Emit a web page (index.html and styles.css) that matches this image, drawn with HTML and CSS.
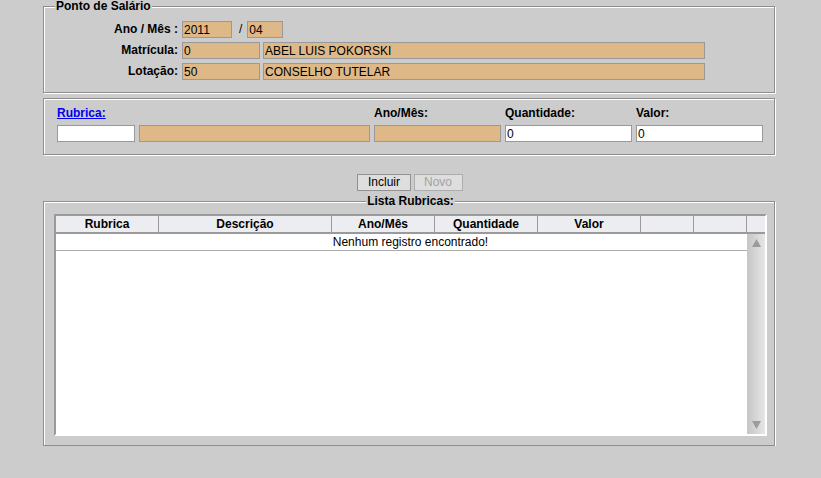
FILE: index.html
```html
<!DOCTYPE html>
<html lang="pt-BR">
<head>
<meta charset="utf-8">
<title>Ponto de Salário</title>
<link rel="stylesheet" href="styles.css">
</head>
<body>
<div class="page">
  <fieldset class="box box-ponto">
    <legend>Ponto de Salário</legend>
    <div class="form-grid">
      <label class="lbl">Ano / Mês :</label>
      <div class="fields">
        <input class="inp ro w-ano" value="2011" readonly>
        <span class="slash">/</span>
        <input class="inp ro w-mes" value="04" readonly>
      </div>
      <label class="lbl">Matrícula:</label>
      <div class="fields pair">
        <input class="inp ro w-cod" value="0" readonly>
        <input class="inp ro w-desc" value="ABEL LUIS POKORSKI" readonly>
      </div>
      <label class="lbl">Lotação:</label>
      <div class="fields pair">
        <input class="inp ro w-cod" value="50" readonly>
        <input class="inp ro w-desc" value="CONSELHO TUTELAR" readonly>
      </div>
    </div>
  </fieldset>

  <fieldset class="box box-rubrica">
    <div class="rub-grid">
      <a class="link" href="#">Rubrica:</a>
      <span class="hdr">Ano/Mês:</span>
      <span class="hdr">Quantidade:</span>
      <span class="hdr">Valor:</span>
      <div class="fields rub-pair">
        <input class="inp w-rcod" value="">
        <input class="inp ro w-rdesc" value="" readonly>
      </div>
      <input class="inp ro" value="" readonly>
      <input class="inp" value="0">
      <input class="inp" value="0">
    </div>
  </fieldset>

  <div class="actions">
    <button class="btn" type="button">Incluir</button>
    <button class="btn" type="button" disabled>Novo</button>
  </div>

  <fieldset class="box box-lista">
    <legend>Lista Rubricas:</legend>
    <div class="grid-table">
      <div class="thead">
        <div class="th">Rubrica</div>
        <div class="th">Descrição</div>
        <div class="th">Ano/Mês</div>
        <div class="th">Quantidade</div>
        <div class="th">Valor</div>
        <div class="th"></div>
        <div class="th"></div>
        <div class="th"></div>
      </div>
      <div class="tbody">
        <div class="row-empty">Nenhum registro encontrado!</div>
        <div class="vscroll">
          <svg width="9" height="8" viewBox="0 0 9 8"><polygon points="4.5,0 9,8 0,8" fill="#9c9c9c"/></svg>
          <svg width="9" height="8" viewBox="0 0 9 8"><polygon points="0,0 9,0 4.5,8" fill="#9c9c9c"/></svg>
        </div>
      </div>
    </div>
  </fieldset>
</div>
</body>
</html>
```
FILE: styles.css
```css
html, body {
  margin: 0;
  padding: 0;
  background: #cccccc;
}

body {
  font-family: "Liberation Sans", Arial, sans-serif;
  font-size: 12px;
  color: #000;
}

.page {
  width: 732px;
  margin-left: 43px;
}

.box {
  margin: 0;
  min-width: 0;
  border: 1px solid #8e8e8e;
  box-shadow: inset 1px 1px 0 #fff, 1px 1px 0 #fff;
}

.box > legend {
  font-weight: bold;
  line-height: 13px;
  padding: 0 1px;
  background: #cccccc;
}

/* Ponto de Salário */
.box-ponto {
  padding: 8px 10px 12px 11px;
}

.form-grid {
  display: grid;
  grid-template-columns: 125px auto;
  column-gap: 2px;
  row-gap: 4px;
  align-items: center;
}

.lbl {
  font-weight: bold;
  text-align: right;
  padding-right: 2px;
  line-height: 17px;
}

.fields {
  display: flex;
  align-items: center;
}

.pair {
  gap: 3px;
}

.slash {
  margin: 0 5px 0 7px;
  line-height: 17px;
}

.inp {
  box-sizing: border-box;
  height: 17px;
  margin: 0;
  padding: 0 1px;
  border: 1px solid #999;
  background: #fff;
  font-family: "Liberation Sans", Arial, sans-serif;
  font-size: 12px;
  color: #000;
  outline: none;
  width: 100%;
  min-width: 0;
}

.ro {
  background: #deb887;
}

.w-ano { width: 50px; }
.w-mes { width: 36px; }
.w-cod { width: 78px; }
.w-desc { width: 442px; }

/* Rubrica */
.box-rubrica {
  margin-top: 5px;
  padding: 7px 10px 12px 13px;
}

.rub-grid {
  display: grid;
  grid-template-columns: 313px 127px 127px 127px;
  column-gap: 4px;
  row-gap: 5px;
}

.link {
  font-weight: bold;
  color: #0000ee;
  text-decoration: underline;
  line-height: 14px;
  justify-self: start;
}

.hdr {
  font-weight: bold;
  line-height: 14px;
}

.rub-pair {
  gap: 4px;
}

.w-rcod { width: 78px; flex: none; }
.w-rdesc { width: 231px; flex: none; }

/* Buttons */
.actions {
  display: flex;
  justify-content: center;
  gap: 3px;
  margin-top: 19px;
  padding-left: 2px;
}

.btn {
  box-sizing: border-box;
  height: 17px;
  margin: 0;
  padding: 0 9.5px;
  border: 1px solid #929292;
  background: #dedede;
  font-family: "Liberation Sans", Arial, sans-serif;
  font-size: 12px;
  line-height: 15px;
  color: #000;
}

.btn:disabled {
  border-color: #adadad;
  color: #a2a2a2;
}

/* Lista */
.box-lista {
  margin-top: 4px;
  padding: 6px 7px 9px 10px;
}

.box-lista > legend {
  margin: 0 auto;
}

.grid-table {
  border: 2px solid;
  border-color: #9a9a9a #fff #fff #9a9a9a;
  background: #fff;
}

.thead {
  display: grid;
  grid-template-columns: 103px 173px 103px 103px 103px 53px 53px 18px;
  background: #ebedf1;
  border-bottom: 2px solid #9a9a9a;
}

.th {
  height: 16px;
  line-height: 16px;
  text-align: center;
  font-weight: bold;
  border-right: 1px solid #9a9a9a;
}

.th:last-child {
  border-right: 0;
}

.tbody {
  position: relative;
  height: 200px;
}

.row-empty {
  height: 16px;
  line-height: 16px;
  text-align: center;
  border-bottom: 1px solid #acacac;
}

.vscroll {
  position: absolute;
  top: 0;
  right: 0;
  width: 18px;
  height: 200px;
  box-sizing: border-box;
  padding: 5px 0 5px 0;
  background: linear-gradient(to right, #c6c6c6, #e6e6e6);
  display: flex;
  flex-direction: column;
  justify-content: space-between;
  align-items: center;
}

.vscroll svg {
  display: block;
  margin-left: 1px;
}
```
